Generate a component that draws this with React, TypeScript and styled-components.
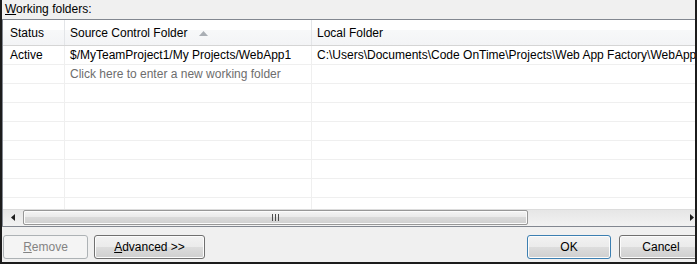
import styled, { createGlobalStyle } from 'styled-components';

const GlobalStyle = createGlobalStyle`
  html, body {
    margin: 0;
    padding: 0;
    background: #f0f0f0;
  }
  body {
    font-family: 'Liberation Sans', Arial, sans-serif;
    font-size: 12px;
    color: #000;
  }
`;

const Frame = styled.div`
  box-sizing: border-box;
  width: 697px;
  height: 264px;
  background: #f0f0f0;
  border-left: 2px solid #1c1c1c;
  border-right: 2px solid #1c1c1c;
  border-bottom: 2px solid #1c1c1c;
  display: flex;
  flex-direction: column;
  overflow: hidden;
`;

const Caption = styled.div`
  height: 19px;
  box-sizing: border-box;
  padding: 2px 0 0 3px;
  line-height: 15px;
  u {
    text-decoration: underline;
  }
`;

const GridBox = styled.div`
  box-sizing: border-box;
  height: 208px;
  margin-right: -8px;
  border: 1px solid #828790;
  background: #fff;
  display: flex;
  flex-direction: column;
`;

const Row = styled.div<{ header?: boolean }>`
  display: grid;
  grid-template-columns: 62px 247px 1fr;
  box-sizing: border-box;
  height: ${(p) => (p.header ? '26px' : '19px')};
  flex-shrink: 0;
  border-bottom: 1px solid ${(p) => (p.header ? '#d5d5d5' : '#efefef')};
  background: ${(p) =>
    p.header ? 'linear-gradient(#ffffff 0%, #ffffff 42%, #f7f8f9 42%, #f3f4f6 100%)' : '#fff'};
`;

const Cell = styled.div<{ header?: boolean; pad?: number; muted?: boolean }>`
  box-sizing: border-box;
  border-right: 1px solid ${(p) => (p.header ? '#e3e5e8' : '#efefef')};
  padding-left: ${(p) => p.pad ?? 5}px;
  padding-top: 1px;
  line-height: ${(p) => (p.header ? '24px' : '17px')};
  white-space: nowrap;
  overflow: hidden;
  color: ${(p) => (p.muted ? '#6d6d6d' : '#000')};
  display: flex;
  align-items: flex-start;
`;

const SortArrow = styled.svg`
  margin-left: 12px;
  margin-top: 10px;
`;

const Body = styled.div`
  flex: 1;
  overflow: hidden;
`;

const HScroll = styled.div`
  height: 17px;
  flex-shrink: 0;
  display: flex;
  align-items: center;
  background: linear-gradient(#dcdcdc 0px, #dcdcdc 1px, #e6e6e6 1px, #f2f2f2 100%);
`;

const ArrowBtn = styled.div`
  width: 20px;
  height: 17px;
  display: flex;
  align-items: center;
  justify-content: center;
  flex-shrink: 0;
`;

const Thumb = styled.div`
  box-sizing: border-box;
  width: 505px;
  height: 15px;
  border: 1px solid #979797;
  border-radius: 2px;
  background: linear-gradient(#f4f4f4 0%, #eaeaea 45%, #d9d9d9 50%, #d0d0d0 100%);
  box-shadow: inset 0 0 0 1px #fbfbfb;
  display: flex;
  align-items: center;
  justify-content: center;
`;

const Spacer = styled.div`
  flex: 1;
`;

const ButtonBar = styled.div`
  display: flex;
  align-items: center;
  margin-top: 8px;
  padding-left: 1px;
  margin-right: -8px;
  gap: 6px;
`;

const Button = styled.button<{ w: number; tone?: 'default' | 'disabled' }>`
  box-sizing: border-box;
  width: ${(p) => p.w}px;
  height: 24px;
  padding: 0;
  font-family: 'Liberation Sans', Arial, sans-serif;
  font-size: 12px;
  border-radius: 3px;
  border: 1px solid
    ${(p) => (p.tone === 'default' ? '#3c7fb1' : p.tone === 'disabled' ? '#adb2b5' : '#707070')};
  color: ${(p) => (p.tone === 'disabled' ? '#838383' : '#000')};
  background: ${(p) =>
    p.tone === 'disabled'
      ? '#f4f4f4'
      : 'linear-gradient(#f2f2f2 0%, #ebebeb 50%, #dddddd 50%, #cfcfcf 100%)'};
  box-shadow: inset 0 0 0 1px ${(p) => (p.tone === 'disabled' ? '#f4f4f4' : '#fcfcfc')};
  flex-shrink: 0;
  u {
    text-decoration: underline;
  }
`;

const RightGroup = styled.div`
  display: flex;
  gap: 8px;
`;

const rows = [
  ['Active', '$/MyTeamProject1/My Projects/WebApp1', 'C:\\Users\\Documents\\Code OnTime\\Projects\\Web App Factory\\WebApp1'],
];

export default function App() {
  const empty = Array.from({ length: 8 });
  return (
    <>
      <GlobalStyle />
      <Frame>
        <Caption>
          <u>W</u>orking folders:
        </Caption>
        <GridBox>
          <Row header>
            <Cell header pad={7}>Status</Cell>
            <Cell header>
              Source Control Folder
              <SortArrow width="9" height="5" viewBox="0 0 9 5">
                <polygon points="0,5 4.5,0 9,5" fill="#a9aeb4" />
              </SortArrow>
            </Cell>
            <Cell header>Local Folder</Cell>
          </Row>
          <Body>
            {rows.map((r) => (
              <Row key={r[1]}>
                <Cell pad={7}>{r[0]}</Cell>
                <Cell>{r[1]}</Cell>
                <Cell>{r[2]}</Cell>
              </Row>
            ))}
            <Row>
              <Cell pad={7}></Cell>
              <Cell muted>Click here to enter a new working folder</Cell>
              <Cell></Cell>
            </Row>
            {empty.map((_, i) => (
              <Row key={i}>
                <Cell></Cell>
                <Cell></Cell>
                <Cell></Cell>
              </Row>
            ))}
          </Body>
          <HScroll>
            <ArrowBtn>
              <svg width="4" height="7" viewBox="0 0 4 7">
                <polygon points="4,0 0,3.5 4,7" fill="#1e1e1e" />
              </svg>
            </ArrowBtn>
            <Thumb>
              <svg width="7" height="7" viewBox="0 0 7 7">
                <rect x="0" y="0" width="1" height="7" fill="#4b4b4b" />
                <rect x="3" y="0" width="1" height="7" fill="#4b4b4b" />
                <rect x="6" y="0" width="1" height="7" fill="#4b4b4b" />
              </svg>
            </Thumb>
            <Spacer />
            <ArrowBtn>
              <svg width="4" height="7" viewBox="0 0 4 7">
                <polygon points="0,0 4,3.5 0,7" fill="#1e1e1e" />
              </svg>
            </ArrowBtn>
          </HScroll>
        </GridBox>
        <ButtonBar>
          <Button w={85} tone="disabled">
            <u>R</u>emove
          </Button>
          <Button w={111}>
            <u>A</u>dvanced &gt;&gt;
          </Button>
          <Spacer />
          <RightGroup>
            <Button w={84} tone="default">OK</Button>
            <Button w={84}>Cancel</Button>
          </RightGroup>
        </ButtonBar>
      </Frame>
    </>
  );
}
